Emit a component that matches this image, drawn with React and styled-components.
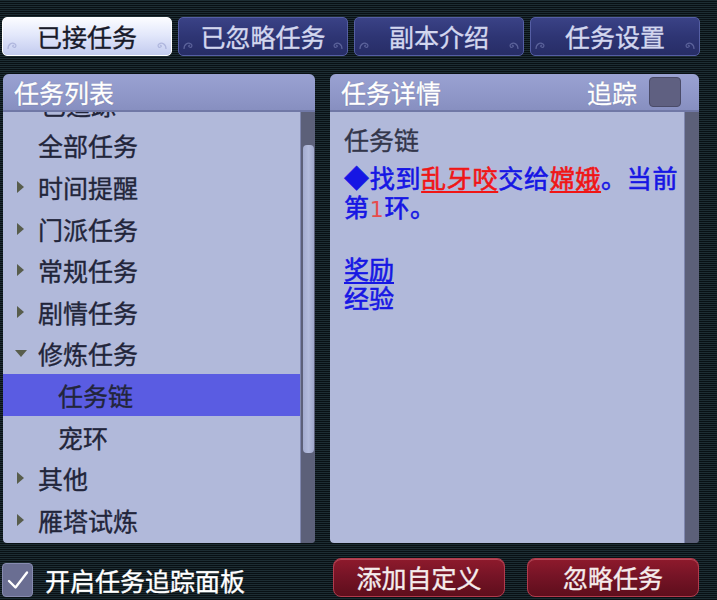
import React from "react";
import styled, { createGlobalStyle, css } from "styled-components";

const TEXT_FONT = `"Noto Sans CJK SC", "Noto Sans", sans-serif`;

const GlobalStyle = createGlobalStyle`
  html, body {
    margin: 0;
    padding: 0;
    background: #0b1216;
  }
  body {
    font-family: ${TEXT_FONT};
  }
`;

const Screen = styled.div`
  width: 717px;
  height: 600px;
  overflow: hidden;
  display: flex;
  flex-direction: column;
  background: repeating-linear-gradient(
    to bottom,
    #1d2d33 0px,
    #1d2d33 1px,
    #091014 1px,
    #091014 2px
  );
  font-family: ${TEXT_FONT};
  -webkit-text-stroke: 0.35px currentColor;
`;

const TabBar = styled.div`
  display: grid;
  grid-template-columns: repeat(4, 170px);
  column-gap: 6px;
  margin: 17px 0 0 2px;
`;

const Tab = styled.div`
  height: 39px;
  box-sizing: border-box;
  border-radius: 5px;
  display: flex;
  align-items: center;
  justify-content: center;
  font-size: 25px;
  line-height: 1;
  position: relative;
  ${(p) =>
    p.$active
      ? css`
          background: linear-gradient(to bottom, #fbfcff 0%, #e3e8fb 45%, #c3cbef 100%);
          border: 1px solid #ffffff;
          color: #181a2a;
        `
      : css`
          background: linear-gradient(to bottom, #3a4286 0%, #2e3574 50%, #272d66 100%);
          border: 1px solid #555ea4;
          color: #d3d7ef;
        `}
`;

const Swirl = styled.svg`
  position: absolute;
  bottom: 5px;
  width: 12px;
  height: 10px;
  opacity: 0.5;
  ${(p) => (p.$right ? "right: 4px; transform: scaleX(-1);" : "left: 4px;")}
`;

const Panels = styled.div`
  display: flex;
  margin: 18px 0 0 3px;
  column-gap: 15px;
  height: 469px;
`;

const Panel = styled.div`
  width: ${(p) => p.$width}px;
  display: flex;
  flex-direction: column;
  border-radius: 6px 6px 4px 4px;
  overflow: hidden;
  background: #5c6079;
`;

const PanelHeader = styled.div`
  height: 38px;
  flex-shrink: 0;
  box-sizing: border-box;
  background: linear-gradient(to bottom, #9aa2d2 0%, #8f97c8 60%, #878fc0 100%);
  border-bottom: 2px solid #7078a6;
  display: flex;
  align-items: center;
  padding: 0 18px 0 11px;
  color: #ffffff;
  font-size: 25px;
  text-shadow: 0 0 1px rgba(40, 44, 80, 0.6);
`;

const HeaderTitle = styled.span`
  flex: 1;
`;

const TrackLabel = styled.span`
  margin-right: 12px;
`;

const TrackBox = styled.div`
  width: 32px;
  height: 30px;
  box-sizing: border-box;
  border-radius: 4px;
  background: #5f6081;
  border: 1px solid #4a4b68;
`;

const PanelBody = styled.div`
  flex: 1;
  display: flex;
  min-height: 0;
`;

const ListArea = styled.div`
  flex: 1;
  overflow: hidden;
  background: #b1b9da;
  border-radius: 0 0 0 4px;
`;

const TaskList = styled.ul`
  list-style: none;
  margin: -29px 0 0 0;
  padding: 0;
`;

const Row = styled.li`
  height: 41.6px;
  display: flex;
  align-items: center;
  box-sizing: border-box;
  padding-left: ${(p) => p.$indent}px;
  font-size: 25px;
  color: #22253a;
  background: ${(p) => (p.$selected ? "#5a5ce2" : "transparent")};
  white-space: nowrap;
`;

const Arrow = styled.span`
  width: 21px;
  flex-shrink: 0;
  display: flex;
  align-items: center;
  &::before {
    content: "";
    display: block;
    ${(p) =>
      p.$open
        ? css`
            margin-left: -2px;
            border-left: 6px solid transparent;
            border-right: 6px solid transparent;
            border-top: 7px solid #585d4c;
          `
        : css`
            border-top: 6px solid transparent;
            border-bottom: 6px solid transparent;
            border-left: 7px solid #585d4c;
          `}
  }
`;

const ScrollTrack = styled.div`
  width: 15px;
  flex-shrink: 0;
  background: #5c6079;
  display: flex;
  flex-direction: column;
  align-items: center;
  padding-top: ${(p) => p.$thumbTop}px;
  box-sizing: border-box;
  border-left: 1px solid #8088b0;
`;

const ScrollThumb = styled.div`
  width: 11px;
  height: ${(p) => p.$size}px;
  border-radius: 4px;
  background: linear-gradient(to right, #a3abcf, #b3bbdc 50%, #a0a8cc);
`;

const DetailArea = styled.div`
  flex: 1;
  background: #b1b9da;
  padding: 13px 4px 0 14px;
  border-radius: 0 0 0 4px;
  font-size: 25px;
  line-height: 28.8px;
`;

const DetailTitle = styled.div`
  color: #33364a;
  margin-bottom: 9px;
`;

const DetailText = styled.div`
  color: #1616e4;
  letter-spacing: 0.7px;
  -webkit-text-stroke: 0.6px currentColor;
`;

const Npc = styled.span`
  color: #f01616;
  text-decoration: underline;
  text-underline-offset: 3px;
`;

const Count = styled.span`
  color: #e84c4c;
  font-family: "DejaVu Sans", sans-serif;
  font-size: 22px;
  -webkit-text-stroke: 0;
`;

const RewardLink = styled.div`
  color: #1616e4;
  margin-top: 30px;
  -webkit-text-stroke: 0.6px currentColor;
  text-decoration: ${(p) => (p.$underline ? "underline" : "none")};
  text-underline-offset: 3px;
  & + & {
    margin-top: 0;
  }
`;

const Footer = styled.div`
  display: flex;
  align-items: center;
  margin-top: 15px;
  height: 39px;
`;

const CheckOption = styled.label`
  width: 333px;
  display: flex;
  align-items: center;
  padding-left: 2px;
  box-sizing: border-box;
  color: #ffffff;
  font-size: 25px;
  margin-top: 5px;
`;

const CheckBox = styled.span`
  width: 31px;
  height: 34px;
  box-sizing: border-box;
  border-radius: 4px;
  background: #6a6e92;
  border: 1px solid #878bb0;
  display: flex;
  align-items: center;
  justify-content: center;
  margin-right: 12px;
`;

const RedButton = styled.button`
  width: 172px;
  height: 39px;
  margin-right: ${(p) => p.$gap || 0}px;
  border-radius: 8px;
  border: 1px solid #b23a4c;
  background: linear-gradient(to bottom, #8e1a2c 0%, #761426 45%, #5e0e1c 100%);
  color: #f5ecec;
  font-family: ${TEXT_FONT};
  font-size: 25px;
  padding: 0;
  line-height: 1;
  -webkit-text-stroke: 0.35px currentColor;
  box-shadow: inset 0 1px 0 rgba(255, 160, 170, 0.35);
`;

const tabs = ["已接任务", "已忽略任务", "副本介绍", "任务设置"];

const tasks = [
  { label: "已追踪", indent: 38 },
  { label: "全部任务", indent: 35 },
  { label: "时间提醒", indent: 14, arrow: "closed" },
  { label: "门派任务", indent: 14, arrow: "closed" },
  { label: "常规任务", indent: 14, arrow: "closed" },
  { label: "剧情任务", indent: 14, arrow: "closed" },
  { label: "修炼任务", indent: 14, arrow: "open" },
  { label: "任务链", indent: 55, selected: true },
  { label: "宠环", indent: 55 },
  { label: "其他", indent: 14, arrow: "closed" },
  { label: "雁塔试炼", indent: 14, arrow: "closed" },
];

const CloudSwirl = ({ right }) => (
  <Swirl viewBox="0 0 12 10" $right={right}>
    <path
      d="M1 9 C1 4 5 2 8 4 C10 5.5 8.5 8 6.5 7 C5 6.2 6 4.8 7 5.4"
      fill="none"
      stroke="#8c94c8"
      strokeWidth="1.2"
    />
  </Swirl>
);

const App = () => {
  return (
    <Screen>
      <GlobalStyle />
      <TabBar>
        {tabs.map((t, i) => (
          <Tab key={t} $active={i === 0}>
            <CloudSwirl />
            {t}
            <CloudSwirl right />
          </Tab>
        ))}
      </TabBar>

      <Panels>
        <Panel $width={312}>
          <PanelHeader>
            <HeaderTitle>任务列表</HeaderTitle>
          </PanelHeader>
          <PanelBody>
            <ListArea>
              <TaskList>
                {tasks.map((task) => (
                  <Row key={task.label} $indent={task.indent} $selected={task.selected}>
                    {task.arrow && <Arrow $open={task.arrow === "open"} />}
                    {task.label}
                  </Row>
                ))}
              </TaskList>
            </ListArea>
            <ScrollTrack $thumbTop={33}>
              <ScrollThumb $size={308} />
            </ScrollTrack>
          </PanelBody>
        </Panel>

        <Panel $width={369}>
          <PanelHeader>
            <HeaderTitle>任务详情</HeaderTitle>
            <TrackLabel>追踪</TrackLabel>
            <TrackBox />
          </PanelHeader>
          <PanelBody>
            <DetailArea>
              <DetailTitle>任务链</DetailTitle>
              <DetailText>
                ◆找到<Npc>乱牙咬</Npc>交给<Npc>嫦娥</Npc>。当前第<Count>1</Count>环。
              </DetailText>
              <RewardLink $underline>奖励</RewardLink>
              <RewardLink>经验</RewardLink>
            </DetailArea>
            <ScrollTrack $thumbTop={0} />
          </PanelBody>
        </Panel>
      </Panels>

      <Footer>
        <CheckOption>
          <CheckBox>
            <svg width="24" height="22" viewBox="0 0 24 22">
              <path
                d="M3 12 L9.5 18.5 L21 3.5"
                fill="none"
                stroke="#ffffff"
                strokeWidth="2.4"
                strokeLinecap="round"
                strokeLinejoin="round"
              />
            </svg>
          </CheckBox>
          开启任务追踪面板
        </CheckOption>
        <RedButton $gap={22}>添加自定义</RedButton>
        <RedButton>忽略任务</RedButton>
      </Footer>
    </Screen>
  );
};

export default App;
